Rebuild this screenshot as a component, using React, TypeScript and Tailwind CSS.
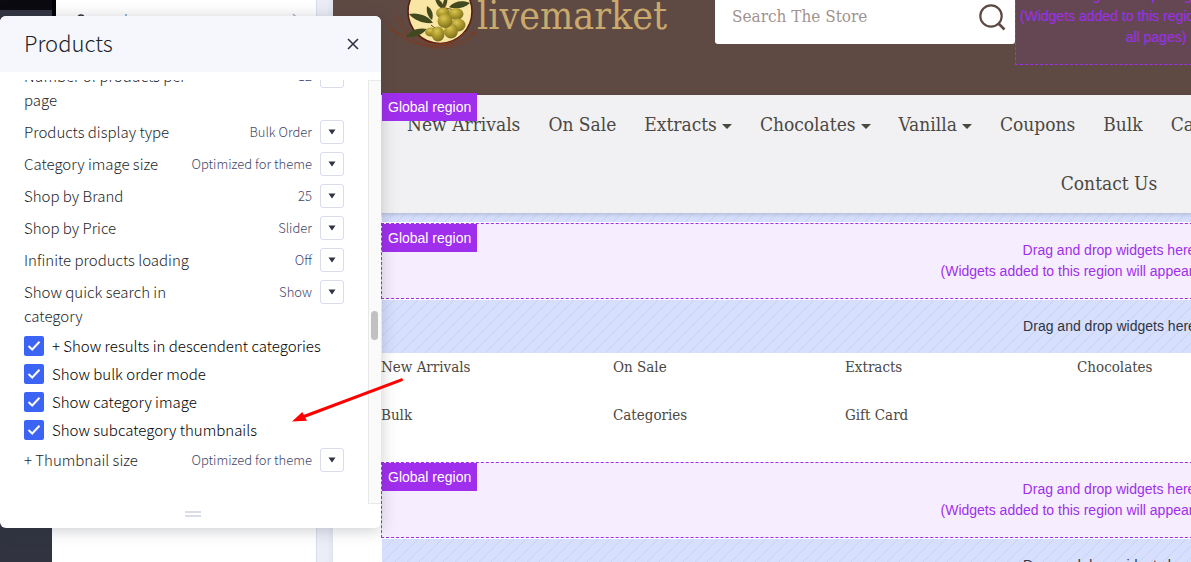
const serif = "font-['DejaVu_Serif_Condensed','DejaVu_Serif',serif]";

const settings = [
  { label: "Number of products per page", value: "12" },
  { label: "Products display type", value: "Bulk Order" },
  { label: "Category image size", value: "Optimized for theme" },
  { label: "Shop by Brand", value: "25" },
  { label: "Shop by Price", value: "Slider" },
  { label: "Infinite products loading", value: "Off" },
  { label: "Show quick search in category", value: "Show" },
];

const toggles = [
  "+ Show results in descendent categories",
  "Show bulk order mode",
  "Show category image",
  "Show subcategory thumbnails",
];

const menu: { label: string; submenu?: boolean }[] = [
  { label: "New Arrivals" },
  { label: "On Sale" },
  { label: "Extracts", submenu: true },
  { label: "Chocolates", submenu: true },
  { label: "Vanilla", submenu: true },
  { label: "Coupons" },
  { label: "Bulk" },
  { label: "Categories" },
];

const categoryRows = [
  ["New Arrivals", "On Sale", "Extracts", "Chocolates"],
  ["Bulk", "Categories", "Gift Card"],
];

function SettingRow({ label, value }: { label: string; value: string }) {
  return (
    <div className="flex items-start justify-between pb-2">
      <span className="w-[176px] text-[15px] leading-6 text-[#1d1f29]">{label}</span>
      <div className="flex shrink-0 items-center gap-2">
        <span className="text-[13px] leading-6 text-[#41456a]">{value}</span>
        <button
          type="button"
          aria-label={label}
          className="flex h-6 w-6 items-center justify-center rounded-[3px] border border-[#d9dce9] bg-white"
        >
          <svg width="8" height="6" viewBox="0 0 8 6" aria-hidden="true">
            <path d="M0.5 0.5H7.5L4 5.5Z" fill="#313440" />
          </svg>
        </button>
      </div>
    </div>
  );
}

function Toggle({ label }: { label: string }) {
  return (
    <label className="flex h-7 items-center gap-2 text-[15px] text-black">
      <span className="grid h-5 w-5 place-items-center">
        <input
          type="checkbox"
          defaultChecked
          className="col-start-1 row-start-1 h-5 w-5 appearance-none rounded-[2px] checked:bg-[#3c64f4]"
        />
        <svg className="pointer-events-none col-start-1 row-start-1" width="14" height="12" viewBox="0 0 14 12" aria-hidden="true">
          <path d="M1.5 6L5.2 9.5L12.5 1.8" fill="none" stroke="#fff" strokeWidth="2" />
        </svg>
      </span>
      {label}
    </label>
  );
}

function ProductsPanel() {
  return (
    <section
      aria-label="Products"
      className="absolute left-0 top-4 flex h-[512px] w-[381px] flex-col overflow-hidden rounded-md bg-white font-['Noto_Sans_CJK_SC',sans-serif] font-light shadow-[0_2px_16px_rgba(49,52,64,0.25)]"
    >
      <header className="flex h-14 shrink-0 items-center justify-between bg-[#f6f7fc] pl-6 pr-[22px]">
        <h2 className="pb-1 text-[22px] leading-8 text-[#1d1f29]">Products</h2>
        <button type="button" aria-label="Close">
          <svg width="12" height="12" viewBox="0 0 12 12" aria-hidden="true">
            <path d="M1 1L11 11M11 1L1 11" stroke="#313440" strokeWidth="1.6" />
          </svg>
        </button>
      </header>
      <div className="mt-2 flex min-h-0 flex-1">
        <div className="flex min-w-0 flex-1 flex-col justify-end overflow-hidden px-6 pb-6">
          {settings.map((s) => (
            <SettingRow key={s.label} {...s} />
          ))}
          <div className="-mt-1 pb-1">
            {toggles.map((t) => (
              <Toggle key={t} label={t} />
            ))}
          </div>
          <SettingRow label="+ Thumbnail size" value="Optimized for theme" />
        </div>
        <div className="w-[13px] border border-r-0 border-[#e8e8e8] bg-[#fafafa] pl-[2px] pt-[230px]">
          <div className="h-[29px] w-[7px] rounded-full bg-[#c1c1c1]" />
        </div>
      </div>
      <div className="flex h-6 shrink-0 flex-col items-center gap-[2px] pl-1 pt-[7px]">
        <span className="h-[2px] w-4 bg-[#d9dce9]" />
        <span className="h-[2px] w-4 bg-[#d9dce9]" />
      </div>
    </section>
  );
}

function GlobalTag() {
  return (
    <span className="bg-[#a02eed] px-[6px] text-[14px] leading-7 text-white">
      Global region
    </span>
  );
}

function GlobalRegion() {
  return (
    <div className="relative my-px border border-dashed border-[#a02eed] bg-[#f6eefe] py-4 text-center text-[14px] leading-[21px] text-[#a02eed]">
      <div className="absolute left-0 top-0 flex">
        <GlobalTag />
      </div>
      <p>Drag and drop widgets here</p>
      <p>(Widgets added to this region will appear on all pages)</p>
    </div>
  );
}

const hatch =
  "ml-px bg-[#d6dffd] bg-[linear-gradient(135deg,#cad3ee_0_4%,transparent_4%_46%,#cad3ee_46%_54%,transparent_54%_96%,#cad3ee_96%)] bg-[length:12px_12px]";

function LocalRegion() {
  return (
    <div className={`${hatch} py-4 text-center text-[14px] leading-[21px] text-[#313440]`}>
      <p>Drag and drop widgets here</p>
    </div>
  );
}

function Logo() {
  return (
    <svg className="shrink-0" width="96" height="54" viewBox="0 0 96 54" aria-hidden="true">
      <defs>
        <radialGradient id="olive" cx="0.4" cy="0.3" r="0.75">
          <stop offset="0" stopColor="#d9c655" />
          <stop offset="0.5" stopColor="#ab982c" />
          <stop offset="1" stopColor="#786a1a" />
        </radialGradient>
      </defs>
      <g fill="none" stroke="#7d3a22" strokeWidth="0.8">
        <path d="M5 20C12 34 32 46 56 46C76 46 90 37 96 29" />
        <path d="M14 10C17 30 36 50 64 48C80 46 90 40 94 32" />
        <path d="M9 27C22 42 46 51 72 43" />
        <path d="M8 30L28 36M19 18L27 34M84 31L96 34" />
      </g>
      <circle cx="59" cy="11.5" r="32" fill="#f9e6a4" stroke="#5a1f12" strokeWidth="1.6" />
      <path d="M33 35C45 47 72 48 84 32" fill="none" stroke="#8d3c1c" strokeWidth="1" />
      <g fill="#42491f">
        <path d="M28 14C37 12 48 16 52 23C42 24 33 20 28 14Z" />
        <path d="M46 6C51 9 53 14 51 20C47 17 45 12 46 6Z" />
        <path d="M25 37C29 30 38 27 46 29C41 35 33 38 25 37Z" />
        <path d="M68 7C73 1 82 0 89 3C84 8 75 10 68 7Z" />
        <path d="M54 -2C60 0 63 4 63 9C58 8 55 4 54 -2ZM66 -4C67 1 66 5 63 9C61 4 62 0 66 -4Z" />
      </g>
      <path d="M63 3L64 14M64 8L74 10M50 25L54 28" stroke="#6a4a1c" strokeWidth="1" fill="none" />
      <g fill="url(#olive)">
        <ellipse cx="62" cy="13" rx="7" ry="5.5" />
        <ellipse cx="75" cy="14" rx="7.5" ry="6" />
        <ellipse cx="77" cy="25" rx="7.5" ry="6.5" />
        <ellipse cx="50" cy="32" rx="6" ry="4.5" />
        <ellipse cx="70" cy="31" rx="7" ry="7.5" />
        <ellipse cx="57" cy="34" rx="6.5" ry="7.5" />
        <ellipse cx="64" cy="21" rx="7.5" ry="7" />
      </g>
    </svg>
  );
}

function StoreHeader() {
  return (
    <header className="flex h-[95px] items-start overflow-hidden bg-[#5f4a43] pl-12">
      <a href="#" className={`flex w-[334px] shrink-0 items-start text-[39px] leading-[32px] text-[#c9a96c] ${serif}`}>
        <Logo />
        <span>livemarket</span>
      </a>
      <form className="-mt-[10px] flex h-[54px] w-[300px] shrink-0 items-center rounded-[3px] bg-white pl-[17px] pr-[9px]">
        <input
          type="search"
          aria-label="Search The Store"
          placeholder="Search The Store"
          className={`min-w-0 flex-1 bg-transparent text-[17px] text-[#5f4a43] outline-none placeholder:text-[#a2938e] ${serif}`}
        />
        <button type="button" aria-label="Search">
          <svg width="27" height="27" viewBox="0 0 27 27" aria-hidden="true">
            <circle cx="12" cy="12" r="10.7" fill="none" stroke="#5f4a43" strokeWidth="2.2" />
            <path d="M19 19L25.5 25.5" stroke="#5f4a43" strokeWidth="2.6" />
          </svg>
        </button>
      </form>
      <div className="-mt-8 w-[282px] shrink-0 border border-dashed border-[#a02eed] bg-[#a02eed]/10 py-4 text-center text-[14px] leading-[21px] text-[#a02eed]">
        <p>Drag and drop widgets here</p>
        <p>(Widgets added to this region will appear on all pages)</p>
      </div>
    </header>
  );
}

function StoreNav() {
  return (
    <nav className={`relative bg-[#f1f1f3] text-[19px] leading-[59px] text-[#4b4742] shadow-[0_1px_5px_rgba(49,52,64,0.25)] ${serif}`}>
      <div className="absolute -top-[2px] left-[49px] flex font-['Liberation_Sans',Arial,sans-serif]">
        <GlobalTag />
      </div>
      <ul className="flex gap-7 pl-[74px]">
        {menu.map((m) => (
          <li key={m.label}>
            <a href="#" className="flex items-center gap-[5px] whitespace-nowrap">
              {m.label}
              {m.submenu && (
                <svg className="mt-1" width="10" height="5" viewBox="0 0 10 5" aria-hidden="true">
                  <path d="M0 0H10L5 5Z" fill="#4b4742" />
                </svg>
              )}
            </a>
          </li>
        ))}
      </ul>
      <p className="text-center">
        <a href="#">Contact Us</a>
      </p>
    </nav>
  );
}

export default function App() {
  return (
    <div className="relative flex h-screen overflow-hidden bg-white font-['Liberation_Sans',Arial,sans-serif]">
      <aside className="w-[52px] shrink-0 border-t-[10px] border-[#0a0a10] bg-[#313440]" />
      <aside className="flex w-[265px] shrink-0 items-start border-r border-[#d9dce9] bg-white">
        <div className="h-4 w-1 bg-black" />
        <svg width="250" height="20" viewBox="0 0 250 20" aria-hidden="true">
          <circle cx="25" cy="18" r="3" fill="none" stroke="#3b2a3a" strokeWidth="1.4" />
          <path d="M70 14V20" stroke="#5a9ccc" strokeWidth="1.4" />
          <path d="M237 14L241 18" stroke="#a9aec8" strokeWidth="1.4" />
        </svg>
      </aside>
      <div className="w-4 shrink-0 bg-gradient-to-r from-[#ebeef7] from-60% to-[#e2e5ef]" />
      <main className="min-w-0 flex-1 overflow-hidden">
        <div className="w-[1552px]">
          <StoreHeader />
          <StoreNav />
          <div className="px-12">
            <div className={`${hatch} h-[9px]`} />
            <GlobalRegion />
            <LocalRegion />
            <div className={`pb-[10px] pt-[2px] text-[15px] leading-6 text-[#4b4742] ${serif}`}>
              {categoryRows.map((row) => (
                <ul key={row[0]} className="grid grid-cols-6 pb-6 pr-16">
                  {row.map((c) => (
                    <li key={c}>
                      <a href="#">{c}</a>
                    </li>
                  ))}
                </ul>
              ))}
            </div>
            <GlobalRegion />
            <LocalRegion />
          </div>
        </div>
      </main>
      <ProductsPanel />
      <svg
        className="pointer-events-none absolute left-[290px] top-[376px]"
        width="116"
        height="50"
        viewBox="0 0 116 50"
        aria-hidden="true"
      >
        <path d="M111.5 3.8L14 40.5" stroke="#ff0000" strokeWidth="3" strokeLinecap="round" />
        <path d="M2 45.5L12.3 36L17 44.8Z" fill="#ff0000" />
      </svg>
    </div>
  );
}
